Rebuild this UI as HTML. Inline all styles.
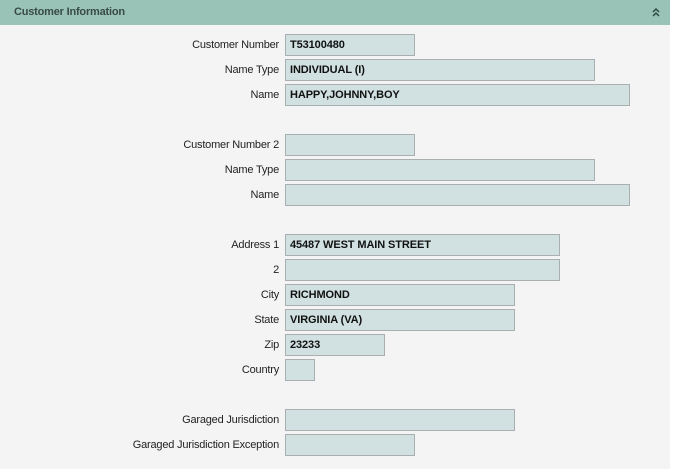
<!DOCTYPE html>
<html><head><meta charset="utf-8"><style>
html,body{margin:0;padding:0;background:#fff;width:674px;height:472px;overflow:hidden}
.wrap{position:absolute;left:0;top:0;width:670px;height:469px;background:#f4f4f4}
.hdr{position:absolute;left:0;top:0;width:670px;height:25px;background:#99c3b7;}
.hdr span{position:absolute;left:14px;top:6px;font:bold 11px "Liberation Sans",sans-serif;color:#3a4a46;letter-spacing:-0.2px}
.lbl{position:absolute;right:391px;font:11px "Liberation Sans",sans-serif;color:#222;white-space:nowrap;letter-spacing:-0.2px}
.box{position:absolute;left:285px;height:20px;background:#d1e0e0;border:1px solid #a9aeae;font:bold 11px "Liberation Sans",sans-serif;color:#111;line-height:20px;padding-left:4px;letter-spacing:-0.1px}
</style></head><body><div class="wrap">
<div class="hdr"><span>Customer Information</span>
<svg style="position:absolute;left:652px;top:8px" width="8" height="9" viewBox="0 0 8 9"><path d="M1 4 L4 1 L7 4 M1 8 L4 5 L7 8" stroke="#2f4a44" stroke-width="1.5" fill="none"/></svg></div>

<div class="lbl" style="top:39px">Customer Number</div><div class="box" style="top:34px;width:124px">T53100480</div>
<div class="lbl" style="top:64px">Name Type</div><div class="box" style="top:59px;width:304px">INDIVIDUAL (I)</div>
<div class="lbl" style="top:89px">Name</div><div class="box" style="top:84px;width:339px">HAPPY,JOHNNY,BOY</div>

<div class="lbl" style="top:139px">Customer Number 2</div><div class="box" style="top:134px;width:124px"></div>
<div class="lbl" style="top:164px">Name Type</div><div class="box" style="top:159px;width:304px"></div>
<div class="lbl" style="top:189px">Name</div><div class="box" style="top:184px;width:339px"></div>

<div class="lbl" style="top:239px">Address 1</div><div class="box" style="top:234px;width:269px">45487 WEST MAIN STREET</div>
<div class="lbl" style="top:264px">2</div><div class="box" style="top:259px;width:269px"></div>
<div class="lbl" style="top:289px">City</div><div class="box" style="top:284px;width:224px">RICHMOND</div>
<div class="lbl" style="top:314px">State</div><div class="box" style="top:309px;width:224px">VIRGINIA (VA)</div>
<div class="lbl" style="top:339px">Zip</div><div class="box" style="top:334px;width:94px">23233</div>
<div class="lbl" style="top:364px">Country</div><div class="box" style="top:359px;width:24px"></div>

<div class="lbl" style="top:414px">Garaged Jurisdiction</div><div class="box" style="top:409px;width:224px"></div>
<div class="lbl" style="top:439px">Garaged Jurisdiction Exception</div><div class="box" style="top:434px;width:124px"></div>
</div></body></html>
